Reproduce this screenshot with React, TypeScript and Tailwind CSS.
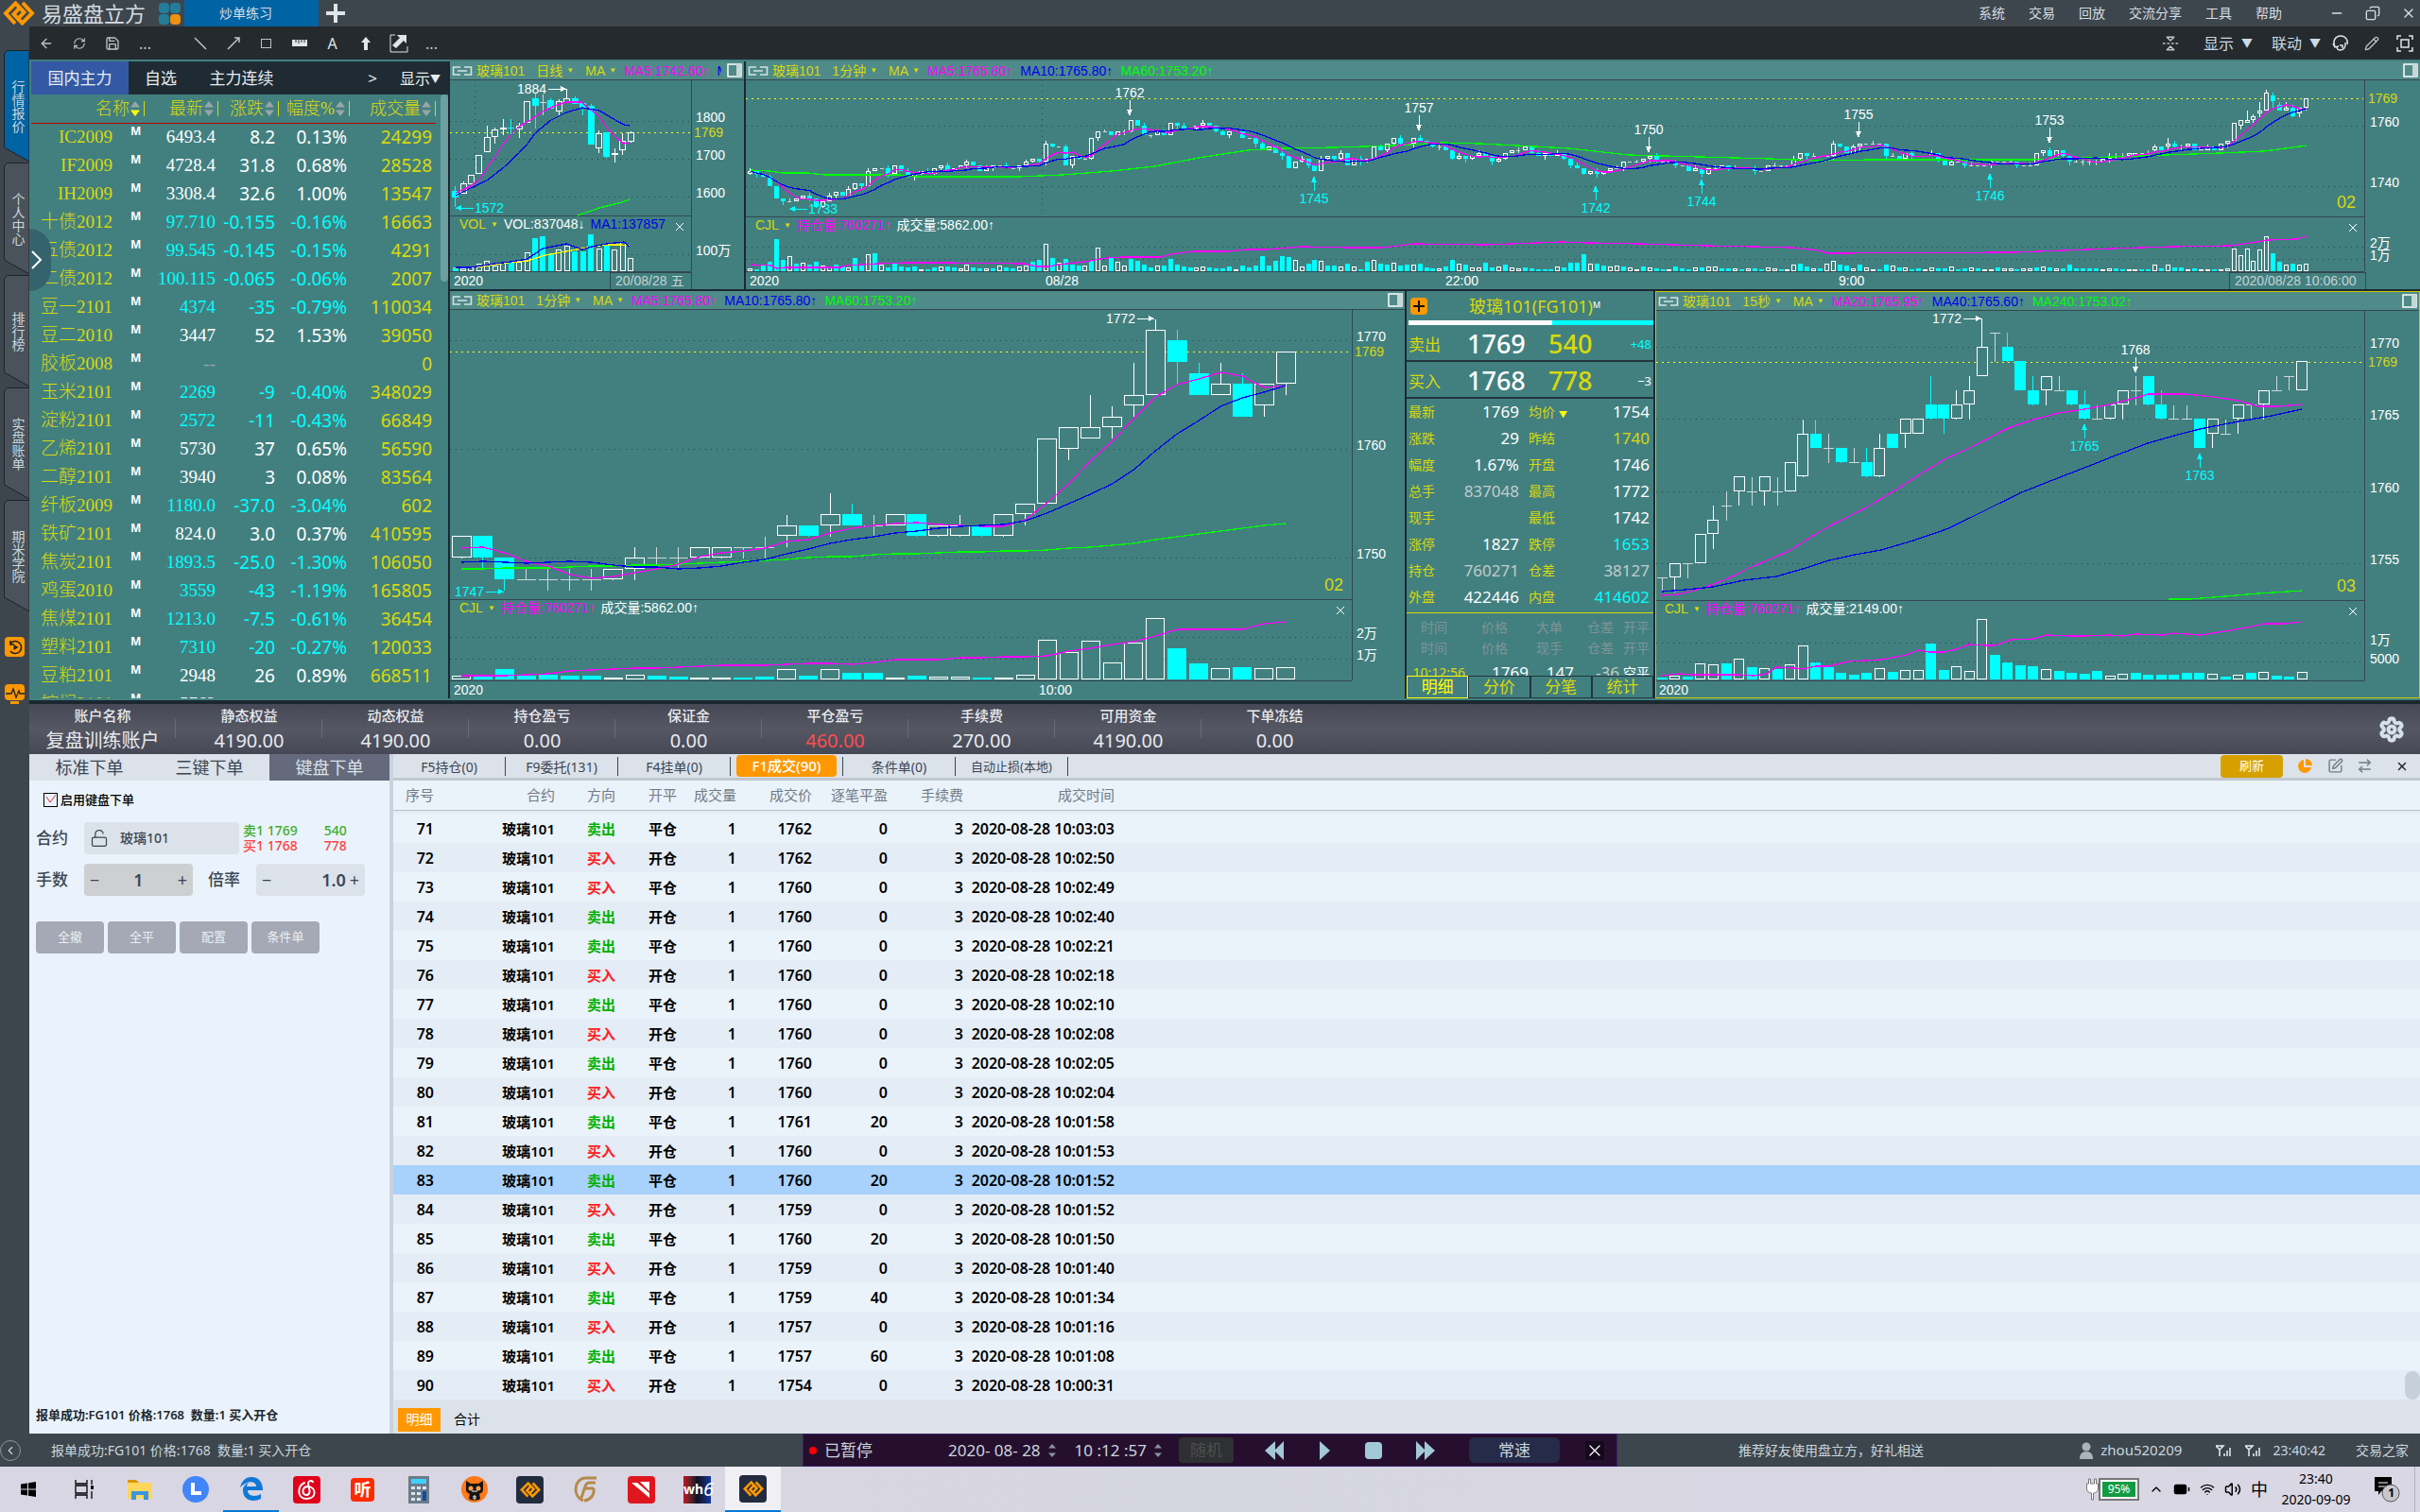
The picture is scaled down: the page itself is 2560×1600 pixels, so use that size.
import React from "react";
import {
  ArrowLeft,
  RefreshCw,
  Save,
  ChevronUp,
  ChevronLeft,
  FlipVertical2,
  Pencil,
  Settings,
  SquarePen,
  ArrowRightLeft,
  X,
  Minus,
  Copy,
  LockOpen,
  Wifi,
  Volume2,
  BatteryFull,
} from "lucide-react";

const TEAL = "#428080";
const AXIS = "#34474f";
const YELLOW = "#d9d90a";
const CYAN = "#00ffff";

/* ---------- data ---------- */

type Bar = [number, number, number, number]; // open, high, low, close

const minuteBars: Bar[] = [
  [1750, 1752, 1750, 1752], [1752, 1752, 1749, 1750], [1750, 1750, 1747, 1748], [1748, 1749, 1748, 1748],
  [1748, 1749, 1747, 1748], [1748, 1749, 1747, 1748], [1748, 1749, 1747, 1748], [1748, 1749, 1748, 1749],
  [1749, 1751, 1748, 1750], [1750, 1751, 1749, 1750], [1750, 1751, 1749, 1750], [1750, 1751, 1750, 1751],
  [1750, 1751, 1750, 1751], [1751, 1751, 1750, 1751], [1751, 1752, 1750, 1751], [1752, 1754, 1751, 1753],
  [1753, 1753, 1752, 1752], [1753, 1756, 1752, 1754], [1754, 1755, 1753, 1753], [1753, 1754, 1752, 1753],
  [1753, 1754, 1753, 1754], [1754, 1754, 1752, 1752], [1752, 1753, 1752, 1753], [1752, 1754, 1752, 1753],
  [1753, 1753, 1752, 1752], [1752, 1754, 1752, 1754], [1754, 1755, 1753, 1755], [1755, 1761, 1755, 1761],
  [1760, 1762, 1759, 1762], [1761, 1765, 1761, 1762], [1762, 1764, 1761, 1763], [1764, 1768, 1763, 1765],
  [1765, 1772, 1765, 1771], [1770, 1771, 1766, 1768], [1767, 1768, 1765, 1765], [1765, 1768, 1765, 1766],
  [1766, 1767, 1763, 1763], [1764, 1766, 1763, 1766], [1766, 1769, 1765, 1769],
];

const minuteVolumes = [
  3, 3, 10, 3, 4, 3, 3, 1, 4, 3, 2, 1, 1, 1, 2, 10, 3, 10, 6, 6, 1, 3, 2, 2, 1, 1, 4, 41, 28, 40, 17, 38, 64, 32, 16,
  11, 12, 11, 12,
];
const minuteKinds = "wccccccwwccwwccwcwccwcwwcwwwwwwwwccwcww";

const minuteMa5 = [
  580, 579, 585, 594, 599, 608, 612, 610, 606, 602, 597, 589, 585, 583, 580, 573, 571, 564, 559, 556, 554, 553, 555,
  556, 557, 557, 550, 532, 512, 488, 467, 443, 420, 407, 401, 394, 398, 410, 408,
];
const minuteMa10 = [
  595, 594, 595, 596, 595, 594, 595, 598, 600, 600, 602, 601, 599, 595, 592, 586, 581, 575, 571, 568, 564, 562, 559,
  557, 556, 555, 551, 543, 533, 523, 512, 497, 477, 459, 445, 430, 421, 415, 408,
];
const minuteMa60 = [
  602, 602, 601, 601, 601, 600, 599, 599, 598, 598, 597, 596, 595, 594, 593, 592, 590, 589, 589, 587, 586, 586, 585,
  584, 584, 583, 583, 582, 580, 579, 577, 575, 571, 568, 565, 562, 559, 556, 554,
];
const minuteOi = [
  715, 715, 715, 714, 713, 710, 709, 708, 707, 707, 706, 705, 704, 704, 704, 703, 702, 702, 703, 701, 698, 698, 698,
  696, 696, 695, 695, 694, 689, 686, 682, 679, 673, 666, 666, 666, 666, 660, 658,
];

const quarterBars: Bar[] = [
  [1754, 1754, 1753, 1754], [1754, 1755, 1753, 1755], [1755, 1755, 1754, 1755], [1755, 1757, 1755, 1757],
  [1757, 1759, 1756, 1758], [1759, 1760, 1758, 1759], [1760, 1761, 1759, 1761], [1760, 1761, 1759, 1760],
  [1760, 1761, 1759, 1761], [1760, 1761, 1759, 1760], [1760, 1762, 1760, 1762], [1761, 1765, 1761, 1764],
  [1764, 1765, 1763, 1763], [1763, 1764, 1762, 1763], [1763, 1763, 1762, 1762], [1762, 1763, 1762, 1762],
  [1762, 1763, 1761, 1761], [1761, 1764, 1761, 1763], [1764, 1764, 1763, 1763], [1764, 1765, 1763, 1765],
  [1764, 1765, 1764, 1765], [1766, 1768, 1765, 1765], [1766, 1766, 1764, 1765], [1765, 1767, 1765, 1766],
  [1766, 1768, 1765, 1767], [1768, 1772, 1768, 1770], [1771, 1771, 1769, 1771], [1770, 1771, 1769, 1769],
  [1769, 1769, 1767, 1767], [1767, 1768, 1766, 1766], [1767, 1768, 1766, 1768], [1767, 1768, 1767, 1767],
  [1767, 1767, 1766, 1766], [1766, 1767, 1765, 1765], [1765, 1766, 1765, 1765], [1765, 1766, 1765, 1766],
  [1766, 1767, 1765, 1767], [1767, 1768, 1766, 1767], [1768, 1768, 1766, 1766], [1766, 1767, 1765, 1765],
  [1765, 1766, 1765, 1765], [1765, 1766, 1765, 1765], [1765, 1765, 1763, 1763], [1764, 1765, 1763, 1765],
  [1764, 1765, 1764, 1764], [1765, 1766, 1764, 1766], [1766, 1766, 1765, 1766], [1766, 1767, 1765, 1767],
  [1767, 1768, 1767, 1767], [1768, 1768, 1767, 1768], [1767, 1769, 1767, 1769],
];
const quarterVolumes = [
  1, 3, 2, 16, 15, 16, 21, 12, 11, 10, 15, 35, 17, 12, 6, 4, 6, 11, 7, 9, 9, 37, 9, 13, 8, 63, 25, 17, 14, 13, 10, 8, 6,
  5, 8, 3, 5, 6, 4, 4, 4, 6, 6, 5, 2, 4, 6, 7, 3, 2, 7,
];
const quarterKinds = "cwcwwcwcwcwwcccccwcwwccwwwccccwccccwwccccccwcwcwccw";

// top, bottom, high, low of every daily candle in chart pixels
const dailyBars: [number, number, number, number, string][] = [
  [202, 208, 197, 219, "c"], [194, 204, 192, 204, "w"], [185, 194, 185, 194, "w"], [164, 183, 164, 183, "w"],
  [145, 160, 133, 160, "w"], [137, 144, 135, 152, "w"], [135, 136, 126, 143, "w"], [135, 135, 126, 143, "c"],
  [133, 136, 130, 146, "w"], [107, 129, 107, 129, "w"], [104, 111, 99, 136, "c"], [108, 108, 100, 122, "d"],
  [106, 114, 104, 115, "c"], [107, 117, 105, 122, "w"], [104, 108, 94, 108, "w"], [104, 109, 102, 109, "c"],
  [109, 113, 109, 122, "c"], [112, 152, 110, 152, "c"], [141, 156, 138, 162, "w"], [140, 165, 140, 167, "c"],
  [162, 163, 157, 172, "w"], [149, 158, 141, 164, "w"], [140, 149, 139, 151, "w"],
];
const dailyVolumes = [3, 2, 3, 7, 10, 5, 8, 8, 9, 19, 34, 36, 18, 22, 26, 20, 20, 38, 23, 26, 22, 30, 13];

const sessionCloses = [
  45, 44, 43, 40, 36, 35, 35, 36, 37, 36, 33, 35, 37, 38, 37, 39, 41, 40, 45, 46, 46, 44, 47, 45, 43, 44, 45, 44, 46, 47,
  45, 46, 47, 48, 47, 45, 46, 47, 47, 46, 46, 47, 48, 49, 48, 54, 53, 53, 47, 50, 49, 49, 56, 58, 58, 57, 58, 58, 62,
  60, 57, 57, 58, 57, 61, 60, 59, 59, 60, 61, 60, 58, 57, 58, 58, 56, 56, 54, 52, 53, 51, 50, 46, 48, 49, 47, 45, 49,
  50, 49, 51, 47, 49, 48, 49, 53, 52, 54, 56, 54, 54, 56, 55, 54, 53, 53, 52, 49, 50, 49, 50, 51, 50, 48, 49, 51, 52,
  52, 53, 51, 50, 51, 50, 51, 49, 47, 46, 44, 45, 44, 45, 46, 46, 48, 48, 48, 49, 50, 48, 48, 48, 47, 47, 45, 46, 44,
  46, 46, 47, 46, 46, 46, 46, 45, 45, 47, 47, 47, 47, 49, 51, 50, 50, 50, 50, 54, 53, 51, 53, 54, 54, 54, 54, 50, 50,
  49, 51, 50, 50, 50, 51, 49, 47, 48, 48, 47, 47, 47, 47, 48, 48, 48, 48, 47, 47, 47, 51, 52, 50,
].map((v) => 1700 + v);

const sessionVolumes = [
  2, 1, 5, 9, 33, 11, 15, 7, 8, 6, 9, 5, 4, 6, 4, 3, 13, 7, 17, 18, 6, 3, 7, 4, 3, 4, 1, 1, 3, 4, 4, 3, 2, 6, 3, 2, 2,
  2, 5, 3, 2, 4, 5, 9, 11, 28, 13, 8, 12, 6, 5, 5, 11, 24, 5, 13, 9, 5, 12, 10, 6, 3, 5, 5, 12, 6, 4, 3, 3, 4, 3, 2, 2,
  4, 1, 5, 3, 5, 15, 5, 10, 15, 14, 11, 4, 7, 11, 10, 5, 5, 4, 7, 4, 1, 9, 11, 7, 6, 8, 5, 6, 6, 7, 3, 2, 2, 4, 11, 7,
  6, 3, 3, 8, 3, 4, 6, 3, 2, 3, 2, 1, 1, 1, 4, 3, 8, 8, 17, 7, 7, 5, 4, 5, 4, 3, 1, 4, 3, 2, 1, 1, 4, 2, 1, 3, 3, 4,
  4, 2, 2, 2, 1, 2, 2, 1, 3, 2, 1, 1, 6, 7, 4, 2, 2, 7, 10, 6, 5, 2, 6, 3, 1, 1, 6, 5, 3, 3, 1, 2, 1, 3, 2, 2, 4, 1,
  2, 3, 2, 1, 1, 3, 2, 2, 1, 2, 2, 3, 4, 3,
];

const sessionBars: Bar[] = [
  ...sessionCloses.map((close, i): Bar => {
    const open = i === 0 ? 1744 : sessionCloses[i - 1];
    const up = i % 3 === 0 ? 1 : 0;
    const down = i % 4 === 1 ? 1 : 0;
    return [open, Math.max(open, close) + up, Math.min(open, close) - down, close];
  }),
  ...minuteBars,
];

const contracts: [string, string, string, string, string, string][] = [
  ["IC2009", "6493.4", "8.2", "0.13%", "24299", "up"],
  ["IF2009", "4728.4", "31.8", "0.68%", "28528", "up"],
  ["IH2009", "3308.4", "32.6", "1.00%", "13547", "up"],
  ["十债2012", "97.710", "-0.155", "-0.16%", "16663", "down"],
  ["五债2012", "99.545", "-0.145", "-0.15%", "4291", "down"],
  ["二债2012", "100.115", "-0.065", "-0.06%", "2007", "down"],
  ["豆一2101", "4374", "-35", "-0.79%", "110034", "down"],
  ["豆二2010", "3447", "52", "1.53%", "39050", "up"],
  ["胶板2008", "--", "", "", "0", "none"],
  ["玉米2101", "2269", "-9", "-0.40%", "348029", "down"],
  ["淀粉2101", "2572", "-11", "-0.43%", "66849", "down"],
  ["乙烯2101", "5730", "37", "0.65%", "56590", "up"],
  ["二醇2101", "3940", "3", "0.08%", "83564", "up"],
  ["纤板2009", "1180.0", "-37.0", "-3.04%", "602", "down"],
  ["铁矿2101", "824.0", "3.0", "0.37%", "410595", "up"],
  ["焦炭2101", "1893.5", "-25.0", "-1.30%", "106050", "down"],
  ["鸡蛋2010", "3559", "-43", "-1.19%", "165805", "down"],
  ["焦煤2101", "1213.0", "-7.5", "-0.61%", "36454", "down"],
  ["塑料2101", "7310", "-20", "-0.27%", "120033", "down"],
  ["豆粕2101", "2948", "26", "0.89%", "668511", "up"],
  ["棕榈2101", "5762", "", "", "", "up"],
];

const trades: [number, string, string, string, string, string][] = [
  [71, "卖出", "平仓", "1762", "0", "10:03:03"],
  [72, "买入", "开仓", "1762", "0", "10:02:50"],
  [73, "买入", "平仓", "1760", "0", "10:02:49"],
  [74, "卖出", "开仓", "1760", "0", "10:02:40"],
  [75, "卖出", "平仓", "1760", "0", "10:02:21"],
  [76, "买入", "开仓", "1760", "0", "10:02:18"],
  [77, "卖出", "平仓", "1760", "0", "10:02:10"],
  [78, "买入", "开仓", "1760", "0", "10:02:08"],
  [79, "卖出", "平仓", "1760", "0", "10:02:05"],
  [80, "买入", "开仓", "1760", "0", "10:02:04"],
  [81, "卖出", "平仓", "1761", "20", "10:01:58"],
  [82, "买入", "开仓", "1760", "0", "10:01:53"],
  [83, "卖出", "平仓", "1760", "20", "10:01:52"],
  [84, "买入", "开仓", "1759", "0", "10:01:52"],
  [85, "卖出", "平仓", "1760", "20", "10:01:50"],
  [86, "买入", "开仓", "1759", "0", "10:01:40"],
  [87, "卖出", "平仓", "1759", "40", "10:01:34"],
  [88, "买入", "开仓", "1757", "0", "10:01:16"],
  [89, "卖出", "平仓", "1757", "60", "10:01:08"],
  [90, "买入", "开仓", "1754", "0", "10:00:31"],
];

const funds: [string, string][] = [
  ["账户名称", "复盘训练账户"],
  ["静态权益", "4190.00"],
  ["动态权益", "4190.00"],
  ["持仓盈亏", "0.00"],
  ["保证金", "0.00"],
  ["平仓盈亏", "460.00"],
  ["手续费", "270.00"],
  ["可用资金", "4190.00"],
  ["下单冻结", "0.00"],
];

const depth: [string, string, string, string, string, string][] = [
  ["最新", "1769", "text-white", "均价", "1754", "text-white"],
  ["涨跌", "29", "text-white", "昨结", "1740", "text-[#d9d90a]"],
  ["幅度", "1.67%", "text-white", "开盘", "1746", "text-white"],
  ["总手", "837048", "text-[#c3cccc]", "最高", "1772", "text-white"],
  ["现手", "", "text-white", "最低", "1742", "text-white"],
  ["涨停", "1827", "text-white", "跌停", "1653", "text-[#00ffff]"],
  ["持仓", "760271", "text-[#c3cccc]", "仓差", "38127", "text-[#c3cccc]"],
  ["外盘", "422446", "text-white", "内盘", "414602", "text-[#00ffff]"],
];

/* ---------- chart primitives ---------- */

const series = (ys: number[], x0: number, step: number) => ys.map((y, i) => `${x0 + i * step},${y}`).join(" ");

function average(values: number[], n: number) {
  return values.map((_, i) => {
    const part = values.slice(Math.max(0, i - n + 1), i + 1);
    return part.reduce((a, b) => a + b, 0) / part.length;
  });
}

function Line({ points, color }: { points: string; color: string }) {
  return <polyline points={points} fill="none" stroke={color} strokeWidth="1.3" />;
}

function Candles({ bars, x0, step, width, y }: { bars: Bar[]; x0: number; step: number; width: number; y: (v: number) => number }) {
  return (
    <g>
      {bars.map(([open, high, low, close], i) => {
        const x = x0 + i * step;
        const color = close > open ? "#ffffff" : close < open ? CYAN : "#cdd8d8";
        const top = y(Math.max(open, close));
        const h = Math.abs(y(open) - y(close));
        return (
          <g key={i} stroke={color}>
            <line x1={x} x2={x} y1={y(high)} y2={y(low)} />
            {h > 0 ? (
              <rect x={x - width / 2} y={top} width={width} height={h - 1} fill={close > open ? TEAL : CYAN} />
            ) : (
              <line x1={x - width / 2} x2={x + width / 2} y1={top} y2={top} />
            )}
          </g>
        );
      })}
    </g>
  );
}

function Volumes({ heights, kinds, x0, step, width, base }: { heights: number[]; kinds: string; x0: number; step: number; width: number; base: number }) {
  return (
    <g>
      {heights.map((h, i) => (
        <rect
          key={i}
          x={x0 + i * step - width / 2}
          y={base - h}
          width={width}
          height={h}
          stroke={kinds[i] === "c" ? CYAN : "#ffffff"}
          fill={kinds[i] === "c" ? CYAN : TEAL}
        />
      ))}
    </g>
  );
}

function Grid({ x1, x2, ys }: { x1: number; x2: number; ys: number[] }) {
  return (
    <g stroke="#24434a" strokeDasharray="1 5">
      {ys.map((y) => (
        <line key={y} x1={x1} x2={x2} y1={y} y2={y} />
      ))}
    </g>
  );
}

function Label({ x, y, children, color = "#ffffff", size = 14, anchor = "start" }: { x: number; y: number; children: string; color?: string; size?: number; anchor?: "start" | "middle" | "end" }) {
  return (
    <text x={x} y={y} fill={color} fontSize={size} textAnchor={anchor} dominantBaseline="central">
      {children}
    </text>
  );
}

function Peak({ x, y, children }: { x: number; y: number; children: string }) {
  return (
    <g>
      <Label x={x} y={y} anchor="middle">{children}</Label>
      <path d={`M${x} ${y + 8}V${y + 20}`} stroke="#fff" />
      <path d={`M${x - 3} ${y + 18}h6l-3 7z`} fill="#fff" />
    </g>
  );
}

function Trough({ x, y, children }: { x: number; y: number; children: string }) {
  return (
    <g>
      <Label x={x} y={y} anchor="middle" color={CYAN}>{children}</Label>
      <path d={`M${x} ${y - 8}V${y - 18}`} stroke={CYAN} />
      <path d={`M${x - 3} ${y - 17}h6l-3 -7z`} fill={CYAN} />
    </g>
  );
}

function Pointer({ x1, x2, y, color }: { x1: number; x2: number; y: number; color: string }) {
  const back = x2 > x1 ? -6 : 6;
  return (
    <g>
      <path d={`M${x1} ${y}H${x2}`} stroke={color} />
      <path d={`M${x2} ${y}l${back} -3v6z`} fill={color} />
    </g>
  );
}

function Frame({ left, right, top, split, base }: { left: number; right: number; top: number; split: number; base: number }) {
  return <path d={`M${left} ${split}H${right}M${left} ${base}H${right}M${right} ${top}V${base}`} stroke={AXIS} fill="none" />;
}

function CloseMark({ x, y }: { x: number; y: number }) {
  return <path d={`M${x - 4} ${y - 4}l8 8M${x + 4} ${y - 4}l-8 8`} stroke="#fff" shapeRendering="auto" />;
}

function ChartSvg({ viewBox, height, label, children }: { viewBox: string; height: string; label: string; children: React.ReactNode }) {
  return (
    <svg
      viewBox={viewBox}
      preserveAspectRatio="xMinYMin meet"
      role="img"
      aria-label={label}
      className={`w-full block ${height}`}
      shapeRendering="crispEdges"
      fontFamily="'Liberation Sans','Noto Sans CJK SC',sans-serif"
    >
      {children}
    </svg>
  );
}

function ChartHeader({ period, values, clipped }: { period: string; values: [string, string][]; clipped?: boolean }) {
  return (
    <div className="flex h-5 items-center justify-between bg-[#4f8b89] border-b border-[#34474f] text-sm whitespace-nowrap font-['Liberation_Sans','Noto_Sans_CJK_SC',sans-serif]">
      <div className={clipped ? "flex w-[287px] items-center overflow-hidden" : "flex items-center"}>
        <svg viewBox="0 0 22 10" className="ml-0.5 mr-1 w-[22px] h-2.5 shrink-0" fill="none" stroke="#d5e2e2" strokeWidth="1.6">
          <path d="M9 1H1.500v8H9M13 1h7.500v8H13M6 5h10" />
        </svg>
        <span className="text-[#d9d90a]">玻璃101</span>
        <button className="ml-3 flex items-center text-[#d9d90a]">
          {period}
          <span className="ml-1 text-[8px]">▼</span>
        </button>
        <button className="ml-3 mr-2 flex items-center text-[#d9d90a]">
          MA
          <span className="ml-1 text-[8px]">▼</span>
        </button>
        {values.map(([text, tone]) => (
          <span key={text} className={`mr-2 shrink-0 ${tone}`}>{text}</span>
        ))}
      </div>
      <svg viewBox="0 0 16 15" className="mr-0.5 w-4 h-[15px] shrink-0">
        <path d="M1 1h14v13H1z" fill="none" stroke="#fff" strokeWidth="1.500" />
        <path d="M10 1h5v13h-5z" fill="#c7d6d6" />
      </svg>
    </div>
  );
}

function Indicator({ x, y, name, first, second }: { x: number; y: number; name: string; first: string; second: string }) {
  return (
    <text x={x} y={y} fontSize="14" dominantBaseline="central">
      <tspan fill={YELLOW}>{name}</tspan>
      <tspan fill={YELLOW} fontSize="8" dx="5">▼</tspan>
      <tspan fill="#f0f" dx="6">{first}</tspan>
      <tspan fill="#fff" dx="6">{second}</tspan>
    </text>
  );
}

/* ---------- charts ---------- */

function DailyChart() {
  const x0 = 481.6;
  const step = 8.44;
  return (
    <section className="w-[311px] shrink-0 bg-[#428080]">
      <ChartHeader period="日线" clipped values={[["MA5:1742.60↑", "text-[#ff00ff]"], ["MA10", "text-[#0000f0]"]]} />
      <ChartSvg viewBox="476 85 311 221" height="h-[221px]" label="玻璃101 日线">
        <Grid x1={476} x2={730} ys={[128, 168, 208, 269]} />
        <path d="M502.500 90V228" stroke="#24434a" strokeDasharray="1 5" />
        <path d="M476 140.500H730" stroke="#ff0" strokeDasharray="2 4" />
        <Frame left={476} right={731} top={85} split={228} base={287} />
        {dailyBars.map(([top, bottom, high, low, kind], i) => {
          const x = x0 + i * step;
          const color = kind === "c" ? CYAN : kind === "w" ? "#fff" : "#cdd8d8";
          return (
            <g key={i} stroke={color}>
              <line x1={x} x2={x} y1={high} y2={low} />
              <rect x={x - 3} y={top} width={6} height={Math.max(bottom - top, 0.5)} fill={kind === "w" ? TEAL : color} />
            </g>
          );
        })}
        <Line color="#f0f" points="482,204 498,197 507,190 515,178 523,167 533,152 540,143 549,134 561,127 574,118 587,112 599,108 615,108 626,117 634,123 642,135 651,145 660,152 666,151" />
        <Line color="#0000e8" points="482,207 498,199 515,191 533,177 549,162 558,152 566,141 583,127 599,119 616,114 634,117 651,127 660,132 666,133" />
        <Line color="#0f0" points="611,228 634,220 658,214 666,211" />
        <Label x={547} y={94}>1884</Label>
        <Pointer x1={580} x2={599} y={94} color="#fff" />
        <Label x={502} y={220} color={CYAN}>1572</Label>
        <Pointer x1={501} x2={482} y={220} color={CYAN} />
        <text x={486} y={237} fontSize="14" dominantBaseline="central">
          <tspan fill={YELLOW}>VOL</tspan>
          <tspan fill={YELLOW} fontSize="8" dx="5">▼</tspan>
          <tspan fill="#fff" dx="6">VOL:837048↓</tspan>
          <tspan fill="#0000e8" dx="6">MA1:137857</tspan>
        </text>
        <CloseMark x={719} y={240} />
        <Volumes heights={dailyVolumes} kinds="cwwwwwwcwwcccwwcccwcwww" x0={x0} step={step} width={5} base={286} />
        <Line color="#ff0" points="482,284 510,282 536,278 558,276 577,270 599,266 626,261 642,259 656,259 666,260" />
        <Line color="#0000e8" points="482,283 498,283 523,279 540,277 558,274 574,263 599,258 616,264 626,261 642,258 660,256 666,261" />
        <Label x={736} y={124}>1800</Label>
        <Label x={734} y={140} color={YELLOW}>1769</Label>
        <Label x={736} y={164}>1700</Label>
        <Label x={736} y={204}>1600</Label>
        <Label x={736} y={265}>100万</Label>
        <Label x={480} y={297}>2020</Label>
        <rect x={645} y={288} width={86} height={18} fill="none" stroke={AXIS} />
        <Label x={651} y={297} color="#c5d3d3">20/08/28 五</Label>
      </ChartSvg>
    </section>
  );
}

function SessionChart() {
  const x0 = 793.8;
  const step = 6.944;
  const y = (v: number) => 133.4 + (1760 - v) * 3.2;
  const closes = sessionBars.map((b) => b[3]);
  const heights = [...sessionVolumes.slice(0, 199), ...minuteVolumes.map((v) => Math.max(1, Math.round(v * 0.57)))];
  const kinds = sessionCloses.map((c, i) => (i > 0 && c < sessionCloses[i - 1] ? "c" : i % 3 === 1 ? "c" : "w")).join("") + minuteKinds;
  return (
    <section className="flex-1 min-w-0 bg-[#428080]">
      <ChartHeader
        period="1分钟"
        values={[["MA5:1765.80↑", "text-[#ff00ff]"], ["MA10:1765.80↑", "text-[#0000f0]"], ["MA60:1753.20↑", "text-[#00ff00]"]]}
      />
      <ChartSvg viewBox="789 85 1771 221" height="h-[221px]" label="玻璃101 1分钟">
        <Grid x1={789} x2={2500} ys={[133, 197, 261, 274]} />
        <path d="M1102.500 90V228" stroke="#24434a" strokeDasharray="1 5" />
        <path d="M789 104.500H2500" stroke="#ff0" strokeDasharray="2 4" />
        <Frame left={789} right={2501} top={85} split={229} base={287} />
        <Candles bars={sessionBars} x0={x0} step={step} width={4} y={y} />
        <Line color="#0f0" points="794,180 814,181 828,183 855,183 872,185 952,185 969,187 1078,187 1124,185 1176,181 1222,176 1268,167 1320,159 1337,158 1360,157 1411,156 1475,154 1526,151 1566,152 1624,155 1660,157 1723,164 1798,166 1872,168 1924,170 1981,169 2062,169 2148,169 2234,166 2349,162 2395,160 2440,154" />
        <Line color="#f0f" points={series(average(closes, 5).map(y), x0, step)} />
        <Line color="#0000e8" points={series(average(closes, 10).map(y), x0, step)} />
        <Peak x={1195} y={98}>1762</Peak>
        <Peak x={1501} y={114}>1757</Peak>
        <Peak x={1744} y={137}>1750</Peak>
        <Peak x={1966} y={121}>1755</Peak>
        <Peak x={2168} y={127}>1753</Peak>
        <Trough x={1390} y={210}>1745</Trough>
        <Trough x={1688} y={220}>1742</Trough>
        <Trough x={1800} y={213}>1744</Trough>
        <Trough x={2105} y={207}>1746</Trough>
        <Label x={855} y={221} color={CYAN}>1733</Label>
        <Pointer x1={854} x2={835} y={221} color={CYAN} />
        <Label x={2472} y={214} size={18} color={YELLOW}>02</Label>
        <Indicator x={799} y={238} name="CJL" first="持仓量:760271↑" second="成交量:5862.00↑" />
        <CloseMark x={2489} y={241} />
        <Volumes heights={heights} kinds={kinds} x0={x0} step={step} width={4} base={286} />
        <Line color="#f0f" points="794,280 817,281 821,284 832,283 889,283 895,281 929,279 958,278 998,278 1084,279 1096,282 1110,282 1119,280 1147,277 1170,273 1188,272 1228,272 1239,269 1262,266 1299,266 1320,264 1340,264 1377,261 1429,262 1463,262 1495,258 1572,259 1652,256 1680,257 1735,258 1804,260 1855,261 1895,262 1924,265 1933,268 2131,267 2234,263 2297,261 2360,260 2400,254 2429,253 2440,250" />
        <Label x={2505} y={104} color={YELLOW}>1769</Label>
        <Label x={2507} y={129}>1760</Label>
        <Label x={2507} y={193}>1740</Label>
        <Label x={2507} y={257}>2万</Label>
        <Label x={2507} y={270}>1万</Label>
        <Label x={793} y={297}>2020</Label>
        <Label x={1106} y={297}>08/28</Label>
        <Label x={1529} y={297}>22:00</Label>
        <Label x={1945} y={297}>9:00</Label>
        <rect x={2358} y={288} width={144} height={18} fill="none" stroke={AXIS} />
        <Label x={2364} y={297} color="#c5d3d3">2020/08/28 10:06:00</Label>
      </ChartSvg>
    </section>
  );
}

function MinuteChart() {
  const x0 = 488;
  const step = 22.95;
  const y = (v: number) => 360.5 + (1770 - v) * 11.5;
  return (
    <section className="w-[1010px] shrink-0 bg-[#428080]">
      <ChartHeader
        period="1分钟"
        values={[["MA5:1765.80↑", "text-[#ff00ff]"], ["MA10:1765.80↑", "text-[#0000f0]"], ["MA60:1753.20↑", "text-[#00ff00]"]]}
      />
      <ChartSvg viewBox="476 328 1010 411" height="h-[411px]" label="玻璃101 1分钟">
        <Grid x1={476} x2={1428} ys={[360, 475, 590, 674, 697]} />
        <path d="M476 372.500H1428" stroke="#ff0" strokeDasharray="2 4" />
        <Frame left={476} right={1430} top={328} split={634} base={720} />
        <Candles bars={minuteBars} x0={x0} step={step} width={20} y={y} />
        <Line color="#0f0" points={series(minuteMa60, x0, step)} />
        <Line color="#f0f" points={series(minuteMa5, x0, step)} />
        <Line color="#0000e8" points={series(minuteMa10, x0, step)} />
        <Label x={1170} y={337}>1772</Label>
        <Pointer x1={1203} x2={1221} y={337} color="#fff" />
        <Label x={481} y={626} color={CYAN}>1747</Label>
        <Pointer x1={514} x2={533} y={626} color={CYAN} />
        <Label x={1401} y={619} size={18} color={YELLOW}>02</Label>
        <Indicator x={486} y={643} name="CJL" first="持仓量:760271↑" second="成交量:5862.00↑" />
        <CloseMark x={1418} y={646} />
        <Volumes heights={minuteVolumes} kinds={minuteKinds} x0={x0} step={step} width={19} base={718} />
        <Line color="#f0f" points={series(minuteOi, x0, step)} />
        <Label x={1435} y={356}>1770</Label>
        <Label x={1433} y={372} color={YELLOW}>1769</Label>
        <Label x={1435} y={471}>1760</Label>
        <Label x={1435} y={586}>1750</Label>
        <Label x={1435} y={670}>2万</Label>
        <Label x={1435} y={693}>1万</Label>
        <Label x={480} y={730}>2020</Label>
        <Label x={1099} y={730}>10:00</Label>
      </ChartSvg>
    </section>
  );
}

function QuarterChart() {
  const x0 = 1758.3;
  const step = 13.54;
  const y = (v: number) => 367.5 + (1770 - v) * 15.25;
  return (
    <section className="flex-1 min-w-0 bg-[#428080] border border-[#c9c900]">
      <ChartHeader
        period="15秒"
        values={[["MA20:1765.95↑", "text-[#ff00ff]"], ["MA40:1765.60↑", "text-[#0000f0]"], ["MA240:1753.02↑", "text-[#00ff00]"]]}
      />
      <ChartSvg viewBox="1752 329 807 409" height="h-[409px]" label="玻璃101 15秒">
        <Grid x1={1752} x2={2498} ys={[367, 443, 520, 596, 680, 700]} />
        <path d="M1752 383.500H2498" stroke="#ff0" strokeDasharray="2 4" />
        <Frame left={1752} right={2501} top={329} split={635} base={720} />
        <Candles bars={quarterBars} x0={x0} step={step} width={11} y={y} />
        <Line color="#0f0" points="2294,634 2317,634 2354,631 2389,628 2435,625" />
        <Line color="#f0f" points="1758,630 1776,629 1799,623 1826,613 1853,600 1893,583 1921,565 1935,557 1976,536 2003,520 2031,502 2059,485 2086,473 2124,453 2151,444 2178,437 2205,433 2232,428 2259,421 2273,417 2313,417 2341,420 2368,424 2389,430 2410,430 2435,428" />
        <Line color="#0000e8" points="1758,626 1783,624 1812,621 1845,614 1879,610 1907,602 1935,593 1962,587 1990,582 2024,572 2059,560 2086,547 2114,533 2141,520 2169,509 2205,495 2238,482 2272,469 2300,461 2327,454 2368,446 2403,440 2435,433" />
        <Label x={2044} y={337}>1772</Label>
        <Pointer x1={2077} x2={2096} y={337} color="#fff" />
        <Peak x={2259} y={370}>1768</Peak>
        <Trough x={2205} y={472}>1765</Trough>
        <Trough x={2327} y={503}>1763</Trough>
        <Label x={2472} y={620} size={18} color={YELLOW}>03</Label>
        <Indicator x={1761} y={644} name="CJL" first="持仓量:760271↑" second="成交量:2149.00↑" />
        <CloseMark x={2489} y={647} />
        <Volumes heights={quarterVolumes} kinds={quarterKinds} x0={x0} step={step} width={10} base={718} />
        <Line color="#f0f" points="1758,715 1776,713 1790,714 1838,714 1855,715 1869,713 1879,706 1897,707 1907,708 1921,705 1935,705 1955,700 1990,698 2017,693 2029,688 2041,690 2056,690 2070,687 2083,682 2100,683 2111,683 2127,677 2151,676 2165,672 2189,673 2205,673 2232,672 2245,673 2259,671 2287,672 2300,670 2327,672 2354,668 2382,663 2395,660 2417,660 2435,658" />
        <Label x={2507} y={363}>1770</Label>
        <Label x={2505} y={383} color={YELLOW}>1769</Label>
        <Label x={2507} y={439}>1765</Label>
        <Label x={2507} y={516}>1760</Label>
        <Label x={2507} y={592}>1755</Label>
        <Label x={2507} y={677}>1万</Label>
        <Label x={2507} y={697}>5000</Label>
        <Label x={1755} y={730}>2020</Label>
      </ChartSvg>
    </section>
  );
}

/* ---------- depth panel ---------- */

function DepthPanel() {
  return (
    <section className="w-[261px] shrink-0 bg-[#428080] flex flex-col overflow-hidden h-[431px] text-[#d9d90a]">
      <div className="flex h-[31px] items-center px-1 shrink-0">
        <button aria-label="添加" className="flex size-[18px] items-center justify-center rounded-sm bg-[#ff9800]">
          <svg viewBox="0 0 12 12" className="size-3" stroke="#111" strokeWidth="2">
            <path d="M6 0v12M0 6h12" />
          </svg>
        </button>
        <h2 className="flex-1 pr-2 text-center text-lg">
          玻璃101(FG101)<sup className="text-[9px] text-white">M</sup>
        </h2>
      </div>
      <div className="flex h-[5px] shrink-0 pl-0.5">
        <div className="w-[152px] bg-white" />
        <div className="flex-1 bg-[#00ffff]" />
      </div>
      {[
        ["卖出", "1769", "540", "+48", "text-[#00ffff]"],
        ["买入", "1768", "778", "−3", "text-white"],
      ].map(([side, price, qty, delta, tone]) => (
        <div key={side} className="flex h-[39px] shrink-0 items-center border-b-2 border-[#23343c] px-0.5 pt-1">
          <span className="w-[62px] text-[17px]">{side}</span>
          <span className="w-[86px] text-[27px] font-medium text-white">{price}</span>
          <span className="text-[27px] font-medium">{qty}</span>
          <span className={`ml-auto text-[13px] ${tone}`}>{delta}</span>
        </div>
      ))}
      <dl className="shrink-0 pl-0.5 pr-1 pb-0.5">
        {depth.map(([a, av, at, b, bv, bt]) => (
          <div key={a} className="flex h-7 items-center text-[17px]">
            <dt className="w-10 text-sm">{a}</dt>
            <dd className={`w-[77px] text-right ${at}`}>{av}</dd>
            <dt className="ml-2.5 text-sm">
              {b}
              {b === "均价" && <span className="ml-1 text-[9px] align-bottom text-[#ffff00]">▼</span>}
            </dt>
            <dd className={`ml-auto ${bt}`}>{bv}</dd>
          </div>
        ))}
      </dl>
      <div className="min-h-0 flex-1 overflow-hidden border-t border-[#d9d90a] pt-1 text-sm leading-[22px] text-[#7f9496]">
        {["大单", "现手"].map((kind) => (
          <div key={kind} className="grid grid-cols-[58px_70px_46px_45px_42px]">
            <span className="text-center">时间</span>
            <span className="text-center">价格</span>
            <span className="text-center">{kind}</span>
            <span className="text-right">仓差</span>
            <span className="text-right pr-1">开平</span>
          </div>
        ))}
        <div className="mt-1 grid grid-cols-[62px_67px_48px_48px_36px] text-right">
          <span className="text-[#d9d90a]">10:12:56</span>
          <span className="text-white text-[17px]">1769</span>
          <span className="text-white text-[17px]">147</span>
          <span className="text-[#c3cccc] text-[17px]">-36</span>
          <span className="text-white pr-1">空平</span>
        </div>
      </div>
      <div className="grid h-6 shrink-0 grid-cols-4 text-[17px] leading-[22px]">
        <button className="border border-[#ffff00] text-[#ffff00]">明细</button>
        <button className="border border-[#23343c]">分价</button>
        <button className="border border-[#23343c]">分笔</button>
        <button className="border border-[#23343c]">统计</button>
      </div>
    </section>
  );
}

/* ---------- shell ---------- */

function KnotLogo({ className }: { className: string }) {
  return (
    <svg viewBox="0 0 36 26" className={className} fill="none" stroke="#ff9800" strokeWidth="4">
      <path d="M14 24 4 13 14.500 2.500 23.500 12 16 20" />
      <path d="M22 2 32 13 21.500 23.500 12.500 14 20 6" />
    </svg>
  );
}

function TitleBar() {
  return (
    <header className="flex h-7 items-center bg-[#3e464d] text-[#d6dde3]">
      <KnotLogo className="ml-0.5 w-9 h-[26px]" />
      <h1 className="ml-1.5 text-[22px] leading-7">易盛盘立方</h1>
      <div className="ml-3.5 grid grid-cols-2 gap-px">
        <span className="size-[11px] rounded-sm bg-[#237d9a]" />
        <span className="size-[11px] rounded-sm bg-[#237d9a]" />
        <span className="size-[11px] rounded-sm bg-[#237d9a]" />
        <span className="size-[11px] rounded-sm bg-[#f09010]" />
      </div>
      <button className="ml-1 h-7 w-[142px] bg-[#0063a3] pr-3 text-sm">炒单练习</button>
      <button aria-label="新建" className="ml-2">
        <svg viewBox="0 0 20 20" className="w-5 h-5" stroke="#dfe5e8" strokeWidth="4">
          <path d="M10 0v20M0 10h20" />
        </svg>
      </button>
      <nav className="ml-auto flex gap-[25px] text-sm">
        {["系统", "交易", "回放", "交流分享", "工具", "帮助"].map((item) => (
          <a key={item} href="#">{item}</a>
        ))}
      </nav>
      <div className="ml-[50px] mr-1 flex items-center gap-[22px]">
        <button aria-label="最小化"><Minus className="size-4" /></button>
        <button aria-label="还原"><Copy className="size-4 -scale-x-100" /></button>
        <button aria-label="关闭"><X className="size-4" /></button>
      </div>
    </header>
  );
}

function Toolbar() {
  return (
    <div className="flex h-[35px] items-center bg-[#252a2e] text-[#bcc4ca]">
      <div className="flex w-[140px] items-center">
        <button aria-label="后退" className="flex w-[35px] justify-center"><ArrowLeft className="size-4" /></button>
        <button aria-label="刷新" className="flex w-[35px] justify-center"><RefreshCw className="size-3.5" /></button>
        <button aria-label="保存" className="flex w-[35px] justify-center"><Save className="size-4" /></button>
        <button className="w-[35px]">...</button>
      </div>
      <div className="ml-[23px] flex items-center">
        <button aria-label="线段" className="flex w-[35px] justify-center">
          <svg viewBox="0 0 14 14" className="size-3.5" stroke="currentColor" strokeWidth="1.500"><path d="m1 1 12 12" /></svg>
        </button>
        <button aria-label="射线" className="flex w-[35px] justify-center">
          <svg viewBox="0 0 14 14" className="size-3.5" stroke="currentColor" strokeWidth="1.500" fill="none"><path d="M1 13 13 1M8 1h5v5" /></svg>
        </button>
        <button aria-label="矩形" className="flex w-[35px] justify-center">
          <span className="block h-2.5 w-[11px] border border-current" />
        </button>
        <button aria-label="标尺" className="flex w-[35px] justify-center">
          <svg viewBox="0 0 16 8" className="h-2 w-4"><path d="M0 0h16v7H0z" fill="#dfe5e8" /><path d="M4 0v3M7 0v4M10 0v3M13 0v3" stroke="#252a2e" /></svg>
        </button>
        <button className="w-[35px] text-base text-[#dfe5e8]">A</button>
        <button aria-label="标记" className="flex w-[35px] justify-center">
          <svg viewBox="0 0 10 14" className="h-3.5 w-2.5" fill="#dfe5e8"><path d="M5 0 0 6h3v8h4V6h3z" /></svg>
        </button>
        <button aria-label="选择" className="flex w-[35px] justify-center">
          <svg viewBox="0 0 20 20" className="size-5"><path d="M6 1H1v18h18v-6" fill="none" stroke="#dfe5e8" /><path d="M8 1h10v9l-3-3-8 8-4-3 8-8z" fill="#dfe5e8" /></svg>
        </button>
        <button className="w-[35px]">...</button>
      </div>
      <div className="ml-auto mr-[7px] flex items-center text-base">
        <button aria-label="翻转"><FlipVertical2 className="size-[18px]" /></button>
        <button className="ml-[26px] flex items-center gap-2 text-[#c9dbe5]">显示<span className="text-xs">▼</span></button>
        <button className="ml-5 flex items-center gap-2 text-[#c9dbe5]">联动<span className="text-xs">▼</span></button>
        <button aria-label="同步" className="ml-3">
          <svg viewBox="0 0 18 18" className="size-[18px]" fill="none" stroke="#dfe5e8" strokeWidth="1.500"><path d="M3 12C0 6 4 1 9 1s8 4 7 9M1 9l2 4 4-1" /><path d="M14 8c1 5-2 8-5 8s-4-2-4-3M8 11h3v3" /></svg>
        </button>
        <button aria-label="画笔" className="ml-4"><Pencil className="size-4" /></button>
        <button aria-label="全屏" className="ml-[18px]">
          <svg viewBox="0 0 18 18" className="size-[18px]" fill="none" stroke="#dfe5e8" strokeWidth="1.500"><path d="M1 5V1h4M13 1h4v4M17 13v4h-4M5 17H1v-4M5 5h8v8H5z" /></svg>
        </button>
      </div>
    </div>
  );
}

function SideBar() {
  return (
    <aside className="relative w-[31px] shrink-0 bg-[#3e464d] pt-[25px]">
      {["行情报价", "个人中心", "排行榜", "实盘账单", "期米学院"].map((tab, i) => (
        <button key={tab} className="relative block h-[119px] w-[31px] pl-2 text-[#c9d6de]">
          <svg viewBox="0 0 27 119" className="absolute left-1 top-0 h-[119px] w-[27px]">
            <path d="M.5 4 3.500.5H27V118L.5 103z" fill={i === 0 ? "#0063a3" : "#4a535b"} stroke="#1c2328" />
          </svg>
          <span className="relative mx-auto block w-3.5 text-sm leading-[14px] break-all">{tab}</span>
        </button>
      ))}
      <button aria-label="回放" className="absolute left-[5px] top-[646px] flex size-[21px] items-center justify-center rounded-sm bg-[#ff9800]">
        <svg viewBox="0 0 16 16" className="size-4" fill="none" stroke="#1c2328" strokeWidth="1.600"><path d="M3 4a6.500 6.500 0 1 1 0 8M3 1v4h4" /><path d="m6.500 5 5 3-5 3z" fill="#1c2328" stroke="none" /></svg>
      </button>
      <button aria-label="行情" className="absolute left-[5px] top-[696px] flex w-[21px] h-[17px] items-center justify-center rounded-sm bg-[#ff9800]">
        <svg viewBox="0 0 20 14" className="w-5 h-3.5" fill="none" stroke="#1c2328" strokeWidth="1.300"><path d="M0 8h6l2-5 3 9 3-7 1 3h5" /></svg>
      </button>
      <span className="absolute left-[11px] top-[714px] h-[3px] w-[9px] bg-[#ff9800]" />
      <button aria-label="展开" className="absolute left-[31px] top-[214px] z-10 flex h-[66px] w-[23px] items-center rounded-r-full bg-[#34626d]">
        <svg viewBox="0 0 12 20" className="ml-0.5 h-5 w-3" fill="none" stroke="#fff" strokeWidth="2"><path d="m1 1 9 9-9 9" /></svg>
      </button>
    </aside>
  );
}

function SortMark({ active }: { active?: boolean }) {
  return (
    <svg viewBox="0 0 10 16" className="ml-px h-4 w-2.5">
      <path d="M5 0l5 6.500H0z" fill="#9aa5a5" />
      <path d="M5 16l5-6.500H0z" fill={active ? "#ffff00" : "#9aa5a5"} />
    </svg>
  );
}

function ContractList() {
  return (
    <section className="relative w-[443px] shrink-0 overflow-hidden bg-[#428080] h-[674px] pl-0.5">
      <div className="flex h-[35px] items-center bg-[#1f2b33] text-[17px] text-[#e6ecef]">
        <button className="h-full w-[103px] bg-[#3359a5]">国内主力</button>
        <button className="h-full w-[68px]">自选</button>
        <button className="h-full w-[103px]">主力连续</button>
        <button className="ml-auto">&gt;</button>
        <button className="ml-6 mr-2 text-base">显示<span className="text-[11px] align-middle">▼</span></button>
      </div>
      <table className="w-[428px] table-fixed border-collapse text-[#d9d90a]">
        <colgroup>
          <col className="w-[120px]" />
          <col className="w-[78px]" />
          <col className="w-[64px]" />
          <col className="w-[75px]" />
          <col className="w-[91px]" />
        </colgroup>
        <thead>
          <tr className="h-[30px] border-b border-[#c00000]">
            {["名称", "最新", "涨跌", "幅度%", "成交量"].map((name, i) => (
              <th key={name} className="p-0 font-light">
                <div className="flex items-center justify-end whitespace-nowrap font-['Liberation_Serif','Noto_Sans_CJK_SC',serif] text-lg leading-6">
                  {name}
                  <SortMark active={i === 0} />
                  <span className="ml-1 h-4 w-px bg-[#d9d90a]" />
                </div>
              </th>
            ))}
          </tr>
        </thead>
        <tbody>
          {contracts.map(([name, last, change, pct, volume, trend]) => {
            const tone = trend === "down" ? "text-[#00ffff]" : trend === "none" ? "text-[#9aa5a5]" : "text-white";
            return (
              <tr key={name} className="h-[30px] text-right text-[19px] leading-6 whitespace-nowrap">
                <td className="p-0">
                  <div className="flex justify-end font-light font-['Liberation_Serif','Noto_Sans_CJK_SC',serif]">
                    {name}
                    <sup className="ml-[18px] mr-1 top-0 w-3 text-[13px] leading-3 font-bold text-white font-['Liberation_Sans',sans-serif]">M</sup>
                  </div>
                </td>
                <td className={`p-0 pr-[3px] font-['Liberation_Serif','Noto_Sans_CJK_SC',serif] ${tone}`}>{last}</td>
                <td className={`p-0 pr-1 ${tone}`}>{change}</td>
                <td className={`p-0 pr-[3px] ${tone}`}>{pct}</td>
                <td className="p-0 pr-1">{volume}</td>
              </tr>
            );
          })}
        </tbody>
      </table>
      <div className="absolute right-0 top-[35px] h-[198px] w-2 rounded bg-[#6b9fa0]" />
    </section>
  );
}

function FundsBar() {
  return (
    <dl className="flex h-[53px] items-center bg-linear-to-b from-[#464855] via-[#555763] to-[#464855] text-[#e8eaee]">
      {funds.map(([name, value], i) => (
        <div key={name} className="relative w-[155px] text-center">
          <dt className="text-[15px] leading-6 font-medium">{name}</dt>
          <dd className={i === 5 ? "text-[20px] leading-[30px] text-[#ff4d4d]" : "text-[20px] leading-[30px]"}>{value}</dd>
          {i < 8 && <span className="absolute right-0 top-4 h-5 w-px bg-[#6d6a78]" />}
        </div>
      ))}
      <button aria-label="设置" className="ml-auto mr-4">
        <Settings className="size-7 text-[#d5e0ea]" strokeWidth={3.5} />
      </button>
    </dl>
  );
}

function Stepper({ id, value, box }: { id: string; value: string; box: string }) {
  return (
    <div className={`flex h-[34px] w-[115px] items-center rounded px-1.5 text-[#3b4652] ${box}`}>
      <button aria-label="减" className="text-lg leading-none font-normal">−</button>
      <input
        id={id}
        defaultValue={value}
        className={`min-w-0 flex-1 bg-transparent text-[18px] font-semibold ${value === "1" ? "text-center" : "pr-1 text-right"}`}
      />
      <button aria-label="加" className="text-lg leading-none font-normal">+</button>
    </div>
  );
}

function OrderPanel() {
  return (
    <section className="flex w-[381px] shrink-0 flex-col bg-[#eaf3fb]">
      <div className="grid h-7 grid-cols-3 bg-[#dbe2ea] text-lg leading-7 text-[#3b4652]">
        <button>标准下单</button>
        <button>三键下单</button>
        <button className="bg-[#646a7c] text-[#dbe2ea]">键盘下单</button>
      </div>
      <div className="px-[7px] text-[#3b4652]">
        <label className="mt-2.5 ml-2 flex items-center gap-[3px] text-[13px] leading-5 font-medium text-black">
          <input type="checkbox" defaultChecked className="peer sr-only" />
          <span className="flex size-[15px] items-center justify-center border border-black">
            <svg viewBox="0 0 12 12" className="size-3" fill="none" stroke="#e03030"><path d="m1 3 4 6 6-8" /></svg>
          </span>
          启用键盘下单
        </label>
        <div className="mt-3.5 flex items-center">
          <label htmlFor="contract" className="w-[51px] text-[17px] font-medium">合约</label>
          <div className="flex h-[34px] w-[164px] items-center rounded bg-[#dbe2ea] pl-1.5">
            <LockOpen className="size-5" strokeWidth={1.5} />
            <input id="contract" defaultValue="玻璃101" className="ml-3 w-28 bg-transparent text-sm font-medium" />
          </div>
          <table className="ml-1 text-sm font-medium leading-4">
            <tbody>
              <tr className="text-[#3fae29]">
                <td className="p-0">卖1 1769</td>
                <td className="w-[52px] p-0 text-right">540</td>
              </tr>
              <tr className="text-[#ff4040]">
                <td className="p-0">买1 1768</td>
                <td className="p-0 text-right">778</td>
              </tr>
            </tbody>
          </table>
        </div>
        <div className="mt-2.5 flex items-center text-[17px] font-medium">
          <label htmlFor="lots" className="w-[51px]">手数</label>
          <Stepper id="lots" value="1" box="bg-[#cdcfd1]" />
          <label htmlFor="rate" className="ml-4 w-[51px]">倍率</label>
          <Stepper id="rate" value="1.0" box="bg-[#dbe2ea]" />
        </div>
        <div className="mt-[27px] flex gap-1 text-[13px] text-[#eceff3]">
          {["全撤", "全平", "配置", "条件单"].map((name) => (
            <button key={name} className="h-[34px] w-[72px] rounded bg-[#a4a9b5]">{name}</button>
          ))}
        </div>
      </div>
      <p className="mt-auto mb-2.5 ml-[7px] text-[13px] leading-5 font-semibold text-[#20262c]">报单成功:FG101 价格:1768&nbsp; 数量:1 买入开仓</p>
    </section>
  );
}

function TradeTable() {
  return (
    <section className="relative flex min-w-0 flex-1 flex-col bg-[#dbe2ea]">
      <div className="flex h-7 items-center border-b-[3px] border-[#c3c8cd] text-sm text-[#3b4652]">
        {["F5持仓(0)", "F9委托(131)", "F4挂单(0)", "F1成交(90)", "条件单(0)", "自动止损(本地)"].map((tab, i) => (
          <div key={tab} className="flex h-5 w-[119px] items-center justify-center border-r border-[#3b4652]">
            <button
              className={
                i === 3
                  ? "h-[23px] w-[106px] rounded bg-[#ff9800] text-[15px] font-medium text-white"
                  : i === 5
                    ? "whitespace-nowrap pt-0.5 text-[13px]"
                    : "whitespace-nowrap pt-0.5"
              }
            >
              {tab}
            </button>
          </div>
        ))}
        <div className="ml-auto mr-3 flex items-center">
          <button className="h-6 w-[66px] rounded bg-[#d6a000] text-[13px] text-white">刷新</button>
          <svg viewBox="0 0 16 16" className="ml-[15px] size-4" fill="#ff9800"><path d="M7 1a7 7 0 1 0 8 8H7z" /><path d="M9 0a7 7 0 0 1 7 7H9z" /></svg>
          <button aria-label="编辑" className="ml-4"><SquarePen className="size-[17px] text-[#727c87]" /></button>
          <button aria-label="切换" className="ml-3.5"><ArrowRightLeft className="size-[17px] text-[#727c87]" /></button>
          <button aria-label="关闭" className="ml-6"><X className="size-3.5 text-[#20262c]" strokeWidth={2.5} /></button>
        </div>
      </div>
      <table className="w-full table-fixed border-collapse bg-[#eaf2fa] text-right">
        <colgroup>
          <col className="w-[43px]" />
          <col className="w-32" />
          <col className="w-16" />
          <col className="w-[65px]" />
          <col className="w-[63px]" />
          <col className="w-20" />
          <col className="w-20" />
          <col className="w-20" />
          <col className="w-40" />
          <col />
        </colgroup>
        <thead>
          <tr className="h-[31px] border-b border-[#b7c0c9] text-[15px] leading-6 text-[#727c87]">
            {["序号", "合约", "方向", "开平", "成交量", "成交价", "逐笔平盈", "手续费", "成交时间", ""].map((h) => (
              <th key={h} className="p-0 font-normal whitespace-nowrap">{h}</th>
            ))}
          </tr>
        </thead>
        <tbody className="text-black">
          <tr className="h-1 bg-[#e4ecf5]"><td colSpan={10} className="p-0" /></tr>
          {trades.map(([no, side, action, price, profit, time]) => (
            <tr
              key={no}
              className={`h-[31px] text-[15px] leading-6 font-semibold ${no === 83 ? "bg-[#a8d1fb]" : no % 2 ? "bg-[#eaf2fa]" : "bg-[#e4ecf5]"}`}
            >
              <td className="p-0 text-base">{no}</td>
              <td className="p-0">玻璃101</td>
              <td className={`p-0 ${side === "卖出" ? "text-[#00b000]" : "text-[#ff2020]"}`}>{side}</td>
              <td className="p-0">{action}</td>
              <td className="p-0 text-base">1</td>
              <td className="p-0 text-base">{price}</td>
              <td className="p-0 text-base">{profit}</td>
              <td className="p-0 text-base">3</td>
              <td className="p-0 text-base whitespace-nowrap">2020-08-28 {time}</td>
              <td className="p-0" />
            </tr>
          ))}
        </tbody>
      </table>
      <div className="flex h-9 items-center gap-3.5 pt-1.5 pl-[5px] text-sm">
        <button className="h-[25px] w-[45px] bg-[#ff9800] text-white">明细</button>
        <button>合计</button>
      </div>
      <div className="absolute right-0 bottom-9 h-[30px] w-4 rounded-full bg-[#c6d0da]" />
    </section>
  );
}

function Spin() {
  return (
    <svg viewBox="0 0 8 14" className="ml-2 h-3.5 w-2" fill="#8593a0"><path d="M4 0l4 4.500H0zM4 14l4-4.500H0z" /></svg>
  );
}

function Signal() {
  return (
    <svg viewBox="0 0 17 12" className="h-3 w-[17px]" stroke="#e8eef2" fill="none"><path d="M0 1h8L4 5zM4 5v7M9 9v3M12 6v6M15 3v9" strokeWidth="1.500" /></svg>
  );
}

function StatusBar() {
  return (
    <footer className="grid h-[35px] grid-cols-[1fr_862px_1fr] bg-[#3e464d] text-[#c9d6de]">
      <div className="flex items-center">
        <button aria-label="收起" className="flex size-[22px] items-center justify-center rounded-full border border-[#8a949c]">
          <ChevronLeft className="size-3.5" />
        </button>
        <span className="ml-8 text-sm">报单成功:FG101 价格:1768&nbsp; 数量:1 买入开仓</span>
      </div>
      <div className="flex items-center border border-[#3a1f6b] bg-[#260f2e] pl-1.5">
        <span className="size-2 rounded-full bg-[#ff0000]" />
        <span className="ml-2 text-[17px]">已暂停</span>
        <span className="ml-20 text-[17px] whitespace-nowrap">2020- 08- 28</span>
        <Spin />
        <span className="ml-5 text-[17px] whitespace-nowrap">10 :12 :57</span>
        <Spin />
        <button className="ml-[18px] h-[27px] w-[58px] rounded bg-[#2f3032] text-[17px] text-[#4c4f50]">随机</button>
        <button aria-label="快退" className="ml-[33px]">
          <svg viewBox="0 0 20 20" className="size-5" fill="#a3c8d8"><path d="M11 0v20L0 10zM20 0v20L10 10z" /></svg>
        </button>
        <button aria-label="播放" className="ml-[38px]">
          <svg viewBox="0 0 11 20" className="h-5 w-[11px]" fill="#a3c8d8"><path d="M0 0l11 10L0 20z" /></svg>
        </button>
        <button aria-label="停止" className="ml-[37px] size-[18px] rounded-sm bg-[#a3c8d8]" />
        <button aria-label="快进" className="ml-9">
          <svg viewBox="0 0 20 20" className="size-5" fill="#a3c8d8"><path d="M0 0v20l10-10zM9 0v20l11-10z" /></svg>
        </button>
        <button className="ml-9 h-[27px] w-24 rounded-md bg-[#252b49] text-[17px]">常速</button>
        <button aria-label="关闭" className="ml-[27px] bg-[#150a1c]"><X className="size-5 text-white" strokeWidth={1.5} /></button>
      </div>
      <div className="flex items-center text-sm whitespace-nowrap">
        <span className="ml-32">推荐好友使用盘立方，好礼相送</span>
        <svg viewBox="0 0 14 18" className="ml-auto h-[18px] w-3.5" fill="#a9b5b9"><circle cx="7" cy="5" r="4.500" /><path d="M0 18c0-5 2-8 7-8s7 3 7 8z" /></svg>
        <span className="ml-2 text-[15px]">zhou520209</span>
        <span className="ml-9 flex gap-3.5"><Signal /><Signal /></span>
        <span className="ml-3">23:40:42</span>
        <a href="#" className="ml-8 mr-3">交易之家</a>
      </div>
    </footer>
  );
}

function TaskBar() {
  const icons: [string, React.ReactNode][] = [
    ["开始", <svg viewBox="0 0 16 16" className="size-4" fill="#000"><path d="M0 2.500 7 1.500v6H0zM8 1.300 16 0v7.500H8zM0 8.500h7v6L0 13.500zM8 8.500h8V16l-8-1.200z" /></svg>],
    ["任务视图", <svg viewBox="0 0 20 20" className="size-5" fill="none" stroke="#000" strokeWidth="1.300"><path d="M1 0v4h12V0M1 20v-4h12v4M1 6h12v8H1zM18 0v5M18 12v8" /><path d="M17 6h3v4h-3z" fill="#000" stroke="none" /></svg>],
    ["资源管理器", <svg viewBox="0 0 26 22" className="w-[26px] h-[22px]"><path d="M0 1h9l3 3h-12z" fill="#d9960b" /><path d="M0 4h26v17H0z" fill="#ffd65c" /><path d="M4 22v-9h18v9h-5v-5H9v5z" fill="#3a96dd" /></svg>],
    ["L", <svg viewBox="0 0 28 28" className="size-7"><circle cx="14" cy="14" r="14" fill="#4285f8" /><path d="M11 7v11h9" fill="none" stroke="#fff" strokeWidth="4" /></svg>],
    ["Edge", <svg viewBox="0 0 26 26" className="size-[26px]"><path d="M1 12C3 4 8 1 13 1c8 0 12 6 12 14H9c0 7 9 7 14 4v5c-8 4-19 2-19-9 0-4 3-7 6-8-1 1-2 3-2 4h10c0-6-10-7-17 1z" fill="#0f78d7" /></svg>],
    ["网易云音乐", <svg viewBox="0 0 29 29" className="size-[29px]"><rect width="29" height="29" rx="4" fill="#e0001b" /><path d="M12 7C4 11 4 24 14.500 24 25 24 25 12 16 11c-7 0-7 9-2 9 4 0 4-4 3-7l-1-5c0-3 3-4 5-2" fill="none" stroke="#fff" strokeWidth="2" strokeLinecap="round" /></svg>],
    ["听", <span className="flex size-[25px] items-center justify-center rounded bg-[#ff2a00] text-lg font-bold text-white">听</span>],
    ["计算器", <svg viewBox="0 0 22 29" className="w-[22px] h-[29px]"><rect width="22" height="29" fill="#6b7c8a" /><path d="M3 3h16v5H3z" fill="#3fd2ff" /><path d="M3 11h4v3H3zM9 11h4v3H9zM3 17h4v3H3zM9 17h4v3H9zM3 23h4v3H3zM9 23h4v3H9zM15 11h4v3h-4z" fill="#dfe6ea" /><path d="M15 16h4v10h-4z" fill="#0b4f9e" /></svg>],
    ["浏览器", <svg viewBox="0 0 28 28" className="size-7"><circle cx="14" cy="14" r="14" fill="#ff7a1a" /><path d="M5 5l5 3h8l5-3v9c0 4-3 5-9 5s-9-1-9-5z" fill="#181410" /><path d="M9 18h10l1 6c-3 2-9 2-12 0z" fill="#181410" /><circle cx="10" cy="13" r="2.500" fill="#ffa04d" /><circle cx="18" cy="13" r="2.500" fill="#ffa04d" /><path d="M11 16h6M13 21h2v3h-2z" stroke="#fff" fill="none" /></svg>],
    ["盘立方", <span className="flex size-[29px] items-center justify-center rounded bg-[#232c3f]"><KnotLogo className="w-6 h-[17px]" /></span>],
    ["F", <svg viewBox="0 0 28 28" className="size-7" fill="none" stroke="#b58a4a" strokeWidth="3"><path d="M25 2H14C6 2 3 9 3 14s3 10 8 12M24 7h-7c-3 0-4 3-5 7l-3 9M22 13h-9M22 13c1 7-3 12-10 13" /></svg>],
    ["N", <svg viewBox="0 0 29 29" className="size-[29px]"><rect width="29" height="29" rx="4" fill="#e0161f" /><path d="M4 7l19 16v-5L10 7z" fill="#fff" /><path d="M13 6h10v10z" fill="#fff" /></svg>],
    ["wh6", <span className="flex size-[29px] items-center bg-linear-to-r from-[#c01020] via-[#101020] to-[#1238a0] text-sm leading-none font-bold text-white"><span>wh</span><span className="text-xl font-normal italic">6</span></span>],
    ["盘立方 复盘", <span className="flex size-[29px] items-center justify-center rounded bg-[#232c3f]"><KnotLogo className="w-6 h-[17px]" /></span>],
  ];
  return (
    <div className="flex h-12 items-center bg-linear-to-r from-[#d9d6e4] via-[#d6d6e0] to-[#dad7e5] text-black">
      {icons.map(([name, icon], i) => (
        <button
          key={name}
          aria-label={name}
          className={`flex h-12 w-[59px] shrink-0 items-center justify-center ${i === 13 ? "border-b-2 border-[#0078d7] bg-[#f0eff4]" : i === 4 ? "border-b-2 border-[#0078d7]" : ""}`}
        >
          {icon}
        </button>
      ))}
      <div className="ml-auto flex items-center">
        <svg viewBox="0 0 13 24" className="h-6 w-[13px]" fill="#fff" stroke="#777"><path d="M2.500 6V1h2v5h4V1h2v5h2v5c0 3-2 5-5 5v7h-2v-7c-3 0-5-2-5-5V6z" /></svg>
        <span className="flex h-6 w-[43px] items-center border-2 border-[#777] bg-white p-0.5">
          <span className="h-4 w-full bg-[#139b41] text-center text-xs leading-4 text-white">95%</span>
        </span>
        <button aria-label="更多" className="ml-2.5"><ChevronUp className="size-4" /></button>
        <BatteryFull className="ml-2.5 size-[18px]" fill="#000" />
        <Wifi className="ml-2.5 size-4" />
        <Volume2 className="ml-2.5 size-[18px]" />
        <span className="ml-2.5 text-lg">中</span>
        <time className="ml-3 w-[78px] text-center text-sm leading-[22px]">
          23:40
          <br />
          2020-09-09
        </time>
        <button aria-label="通知" className="relative ml-[23px] mr-3.5 h-7 w-7">
          <svg viewBox="0 0 28 28" className="size-7"><path d="M0 1h18v15H7l-3 4v-4H0z" fill="#000" /><path d="M4 7h10M4 11h8" stroke="#fff" /><circle cx="17" cy="18" r="9" fill="#c8c8cc" stroke="#555" /></svg>
          <span className="absolute right-[7px] bottom-0.5 text-xs leading-4 font-bold">1</span>
        </button>
        <span className="mr-[5px] h-12 w-px bg-[#b5b3c0]" />
      </div>
    </div>
  );
}

export default function App() {
  return (
    <div className="flex min-h-screen flex-col bg-[#3e464d] font-['Noto_Sans','Noto_Sans_CJK_SC',sans-serif]">
      <TitleBar />
      <div className="flex flex-1">
        <SideBar />
        <main className="flex min-w-0 flex-1 flex-col">
          <Toolbar />
          <div className="border-y-2 border-[#428080] bg-[#1c2830]">
            <div className="flex gap-0.5">
              <ContractList />
              <div className="flex min-w-0 flex-1 flex-col gap-0.5">
                <div className="flex gap-0.5">
                  <DailyChart />
                  <SessionChart />
                </div>
                <div className="flex gap-0.5">
                  <MinuteChart />
                  <DepthPanel />
                  <QuarterChart />
                </div>
              </div>
            </div>
          </div>
          <div className="h-1 bg-[#1c2830]" />
          <FundsBar />
          <div className="flex flex-1 gap-1 bg-[#c9d3dd]">
            <OrderPanel />
            <TradeTable />
          </div>
        </main>
      </div>
      <StatusBar />
      <TaskBar />
    </div>
  );
}
